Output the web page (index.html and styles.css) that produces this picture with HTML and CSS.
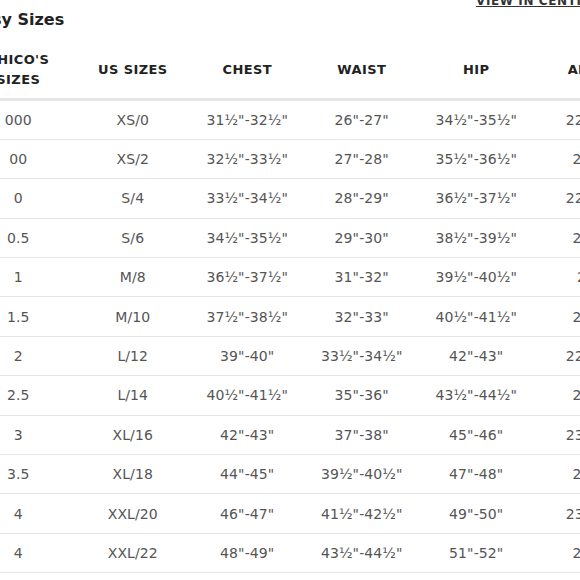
FILE: index.html
```html
<!DOCTYPE html>
<html>
<head>
<meta charset="utf-8">
<link rel="stylesheet" href="styles.css">
</head>
<body>
<div class="page">
  <div class="topbar">
    <h2 class="title">Missy Sizes</h2>
    <a class="view-link" href="#">VIEW IN CENTIMETERS</a>
  </div>
  <table class="chart">
    <thead>
      <tr>
        <th>CHICO'S<br>SIZES</th>
        <th>US SIZES</th>
        <th>CHEST</th>
        <th>WAIST</th>
        <th>HIP</th>
        <th class="last">ARM</th>
      </tr>
    </thead>
    <tbody>
      <tr><td>000</td><td>XS/0</td><td>31½"-32½"</td><td>26"-27"</td><td>34½"-35½"</td><td class="last">22½"</td></tr>
      <tr><td>00</td><td>XS/2</td><td>32½"-33½"</td><td>27"-28"</td><td>35½"-36½"</td><td class="last">23"</td></tr>
      <tr><td>0</td><td>S/4</td><td>33½"-34½"</td><td>28"-29"</td><td>36½"-37½"</td><td class="last">22¾"</td></tr>
      <tr><td>0.5</td><td>S/6</td><td>34½"-35½"</td><td>29"-30"</td><td>38½"-39½"</td><td class="last">23"</td></tr>
      <tr><td>1</td><td>M/8</td><td>36½"-37½"</td><td>31"-32"</td><td>39½"-40½"</td><td class="last">2"</td></tr>
      <tr><td>1.5</td><td>M/10</td><td>37½"-38½"</td><td>32"-33"</td><td>40½"-41½"</td><td class="last">23"</td></tr>
      <tr><td>2</td><td>L/12</td><td>39"-40"</td><td>33½"-34½"</td><td>42"-43"</td><td class="last">22½"</td></tr>
      <tr><td>2.5</td><td>L/14</td><td>40½"-41½"</td><td>35"-36"</td><td>43½"-44½"</td><td class="last">23"</td></tr>
      <tr><td>3</td><td>XL/16</td><td>42"-43"</td><td>37"-38"</td><td>45"-46"</td><td class="last">23¼"</td></tr>
      <tr><td>3.5</td><td>XL/18</td><td>44"-45"</td><td>39½"-40½"</td><td>47"-48"</td><td class="last">24"</td></tr>
      <tr><td>4</td><td>XXL/20</td><td>46"-47"</td><td>41½"-42½"</td><td>49"-50"</td><td class="last">23½"</td></tr>
      <tr><td>4</td><td>XXL/22</td><td>48"-49"</td><td>43½"-44½"</td><td>51"-52"</td><td class="last">24"</td></tr>
    </tbody>
  </table>
</div>
</body>
</html>
```

FILE: styles.css
```css
html, body {
  margin: 0;
  padding: 0;
  overflow: hidden;
  background: #ffffff;
}
body {
  font-family: "DejaVu Sans", "Liberation Sans", sans-serif;
  width: 580px;
  height: 580px;
}
.page {
  margin-left: -39px;
  width: 720px;
}
.topbar {
  display: flex;
  justify-content: space-between;
  align-items: flex-start;
  height: 43px;
  position: relative;
}
.title {
  margin: 10px 0 0 0;
  font-size: 16px;
  font-weight: bold;
  color: #222;
}
.view-link {
  position: absolute;
  left: 515px;
  top: -6px;
  font-size: 12px;
  font-weight: bold;
  color: #333;
  text-decoration: underline;
  letter-spacing: 0.6px;
}
.chart {
  border-collapse: collapse;
  table-layout: fixed;
  width: 687px;
}
.chart th {
  box-sizing: border-box;
  width: 114.5px;
  height: 56px;
  padding: 0;
  font-size: 13px;
  font-weight: bold;
  color: #222;
  text-align: center;
  vertical-align: middle;
  line-height: 20px;
  letter-spacing: 0.4px;
  border-bottom: 3px solid #e6e6e6;
}
.chart td {
  height: 38.4px;
  padding: 0;
  font-size: 14px;
  color: #555;
  text-align: center;
  vertical-align: middle;
  letter-spacing: 0.1px;
  border-bottom: 1px solid #e6e6e6;
}
.chart .last {
  padding-right: 12px;
}
```
